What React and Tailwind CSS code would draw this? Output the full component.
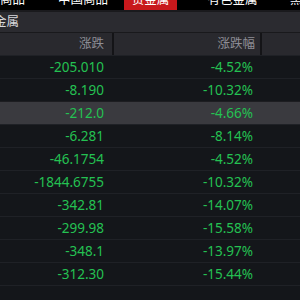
export default function App() {
  const rows = [
    ["-205.010", "-4.52%"],
    ["-8.190", "-10.32%"],
    ["-212.0", "-4.66%"],
    ["-6.281", "-8.14%"],
    ["-46.1754", "-4.52%"],
    ["-1844.6755", "-10.32%"],
    ["-342.81", "-14.07%"],
    ["-299.98", "-15.58%"],
    ["-348.1", "-13.97%"],
    ["-312.30", "-15.44%"],
    ["", ""],
  ];
  const font = { fontFamily: '"Noto Sans", "Noto Sans CJK SC", sans-serif' };
  return (
    <div className="w-[300px] h-[300px] overflow-hidden bg-[#14161a]" style={font}>
      <div className="-mt-[10px] h-[20px] bg-black flex items-center text-[12.5px] text-white whitespace-nowrap">
        <div className="-ml-[25px] w-[50px] text-center shrink-0">外盘商品</div>
        <div className="ml-[33px] w-[50px] text-center shrink-0">中国商品</div>
        <div className="ml-[16px] w-[53px] h-full bg-[#c8181c] flex items-center justify-center shrink-0">贵金属</div>
        <div className="ml-[30px] w-[51px] text-center shrink-0">有色金属</div>
        <div className="ml-[32px] w-[50px] shrink-0">黑色金属</div>
      </div>
      <div className="h-[2px] bg-[#1a1a1d]" />
      <div className="h-[20px] bg-[#2b2b30] flex items-center text-[12.5px] text-[#d8d8dc] whitespace-nowrap">
        <span className="-ml-[6px]">金属</span>
      </div>
      <div className="h-[23px] bg-[#29292e] border-t border-[#19191c] flex text-[12.5px] text-[#8e8e96]">
        <div className="w-[112px] shrink-0 flex items-center justify-end pr-[8px]">涨跌</div>
        <div className="w-[2px] bg-[#141417] shrink-0" />
        <div className="w-[146px] shrink-0 flex items-center justify-end pr-[5px]">涨跌幅</div>
        <div className="w-[2px] bg-[#141417] shrink-0" />
        <div className="flex-1" />
      </div>
      {rows.map((r, i) => (
        <div
          key={i}
          className={
            "h-[23px] flex text-[13.5px] text-[#24c152] border-t " +
            (i === 2 ? "bg-[#3a3a3f] border-[#1d1d21]" : "bg-[#14161a] border-[#1f2126]")
          }
        >
          <div className="w-[112px] shrink-0 flex items-center justify-end pr-[8px]">{r[0]}</div>
          <div className="w-[148px] shrink-0 flex items-center justify-end pr-[7px]">{r[1]}</div>
          <div className="flex-1" />
        </div>
      ))}
    </div>
  );
}
